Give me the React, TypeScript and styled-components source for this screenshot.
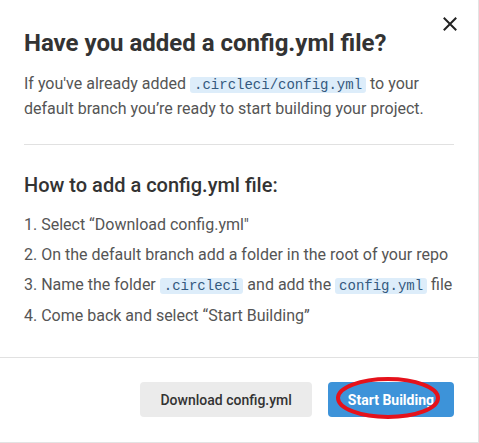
import React from 'react'
import styled, { createGlobalStyle } from 'styled-components'

const GlobalStyle = createGlobalStyle`
  html, body {
    margin: 0;
    padding: 0;
    background: #ffffff;
  }
  body {
    font-family: Roboto, "Liberation Sans", Arial, sans-serif;
  }
`

const Modal = styled.div`
  position: relative;
  width: 479px;
  height: 443px;
  box-sizing: border-box;
  background: #ffffff;
  border-right: 1px solid #e3e3e3;
  border-bottom: 1px solid #e3e3e3;
  display: flex;
  flex-direction: column;
`

const CloseButton = styled.button`
  position: absolute;
  top: 12px;
  right: 16px;
  width: 24px;
  height: 24px;
  padding: 0;
  border: none;
  background: transparent;
  display: flex;
  align-items: center;
  justify-content: center;
  cursor: pointer;
`

const Body = styled.div`
  flex: 1;
  padding: 28px 24px 0 24px;
`

const Title = styled.h2`
  margin: 0;
  font-size: 24px;
  line-height: 30px;
  font-weight: 700;
  color: #333333;
`

const Paragraph = styled.p`
  margin: 14px 0 0 0;
  font-size: 16px;
  line-height: 24px;
  color: #555555;
`

const Code = styled.code`
  font-family: "Liberation Mono", "DejaVu Sans Mono", monospace;
  font-size: 14px;
  color: #34597e;
  background: #ddedfa;
  border-radius: 3px;
  padding: 0 4px;
`

const Divider = styled.hr`
  margin: 23px 0 0 0;
  border: none;
  border-top: 1px solid #e1e1e1;
`

const Subtitle = styled.h3`
  margin: 27px 0 0 0;
  font-size: 20px;
  line-height: 26px;
  font-weight: 500;
  color: #333333;
`

const Steps = styled.ol`
  list-style: none;
  margin: 12px 0 0 0;
  padding: 0;
`

const Step = styled.li`
  font-size: 16px;
  line-height: 30px;
  color: #555555;
`

const Footer = styled.div`
  border-top: 1px solid #e1e1e1;
  padding: 24px 24px 25px 24px;
  display: flex;
  justify-content: flex-end;
  gap: 16px;
`

const Button = styled.button<{ $primary?: boolean }>`
  position: relative;
  height: 35px;
  padding: 0 20px;
  border: none;
  border-radius: 4px;
  font-family: Roboto, "Liberation Sans", Arial, sans-serif;
  font-size: 14px;
  font-weight: ${({ $primary }) => ($primary ? 700 : 500)};
  color: ${({ $primary }) => ($primary ? '#ffffff' : '#333333')};
  background: ${({ $primary }) => ($primary ? '#3d93d9' : '#ebebeb')};
  cursor: pointer;
`

// hand-drawn red circle over the primary button
const Highlight = styled.svg`
  position: absolute;
  left: -12px;
  top: -8px;
  overflow: visible;
  pointer-events: none;
`

export default function App() {
  return (
    <>
      <GlobalStyle />
      <Modal>
        <CloseButton aria-label="Close">
          <svg width="14" height="14" viewBox="0 0 14 14">
            <path d="M1.5 1.5 L12.5 12.5 M12.5 1.5 L1.5 12.5" stroke="#222" strokeWidth="2" strokeLinecap="square" />
          </svg>
        </CloseButton>
        <Body>
          <Title>Have you added a config.yml file?</Title>
          <Paragraph>
            If you've already added <Code>.circleci/config.yml</Code> to your default branch you’re ready
            to start building your project.
          </Paragraph>
          <Divider />
          <Subtitle>How to add a config.yml file:</Subtitle>
          <Steps>
            <Step>1. Select “Download config.yml"</Step>
            <Step>2. On the default branch add a folder in the root of your repo</Step>
            <Step>
              3. Name the folder <Code>.circleci</Code> and add the <Code>config.yml</Code> file
            </Step>
            <Step>4. Come back and select “Start Building”</Step>
          </Steps>
        </Body>
        <Footer>
          <Button>Download config.yml</Button>
          <Button $primary>
            Start Building
            <Highlight width="124" height="52" viewBox="0 0 124 52">
              <ellipse cx="72" cy="24" rx="50" ry="19" fill="none" stroke="#e5121b" strokeWidth="4" />
            </Highlight>
          </Button>
        </Footer>
      </Modal>
    </>
  )
}
